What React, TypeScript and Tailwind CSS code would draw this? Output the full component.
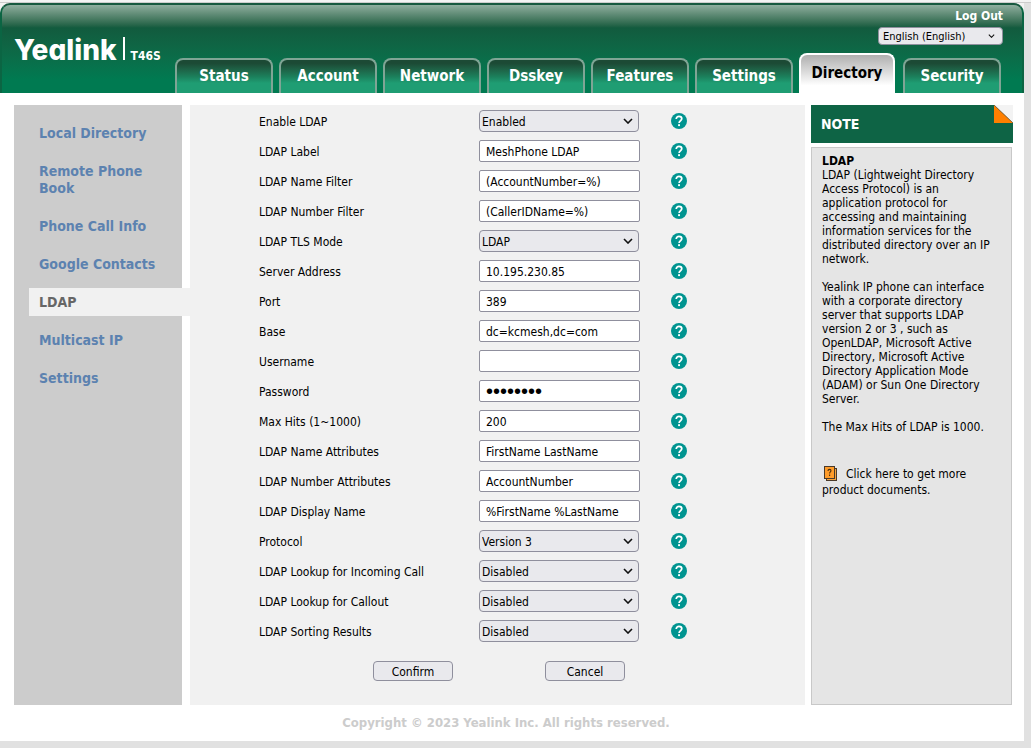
import { useId } from 'react';
import type { ReactNode } from 'react';

type Field = {
  label: string;
  kind: 'select' | 'text' | 'password';
  value: string;
  options?: string[];
};

const toggle = ['Disabled', 'Enabled'];

const fields: Field[] = [
  { label: 'Enable LDAP', kind: 'select', value: 'Enabled', options: toggle },
  { label: 'LDAP Label', kind: 'text', value: 'MeshPhone LDAP' },
  { label: 'LDAP Name Filter', kind: 'text', value: '(AccountNumber=%)' },
  { label: 'LDAP Number Filter', kind: 'text', value: '(CallerIDName=%)' },
  { label: 'LDAP TLS Mode', kind: 'select', value: 'LDAP', options: ['LDAP'] },
  { label: 'Server Address', kind: 'text', value: '10.195.230.85' },
  { label: 'Port', kind: 'text', value: '389' },
  { label: 'Base', kind: 'text', value: 'dc=kcmesh,dc=com' },
  { label: 'Username', kind: 'text', value: '' },
  { label: 'Password', kind: 'password', value: '12345678' },
  { label: 'Max Hits (1~1000)', kind: 'text', value: '200' },
  { label: 'LDAP Name Attributes', kind: 'text', value: 'FirstName LastName' },
  { label: 'LDAP Number Attributes', kind: 'text', value: 'AccountNumber' },
  { label: 'LDAP Display Name', kind: 'text', value: '%FirstName %LastName' },
  { label: 'Protocol', kind: 'select', value: 'Version 3', options: ['Version 3'] },
  { label: 'LDAP Lookup for Incoming Call', kind: 'select', value: 'Disabled', options: toggle },
  { label: 'LDAP Lookup for Callout', kind: 'select', value: 'Disabled', options: toggle },
  { label: 'LDAP Sorting Results', kind: 'select', value: 'Disabled', options: toggle },
];

const tabs = ['Status', 'Account', 'Network', 'Dsskey', 'Features', 'Settings', 'Directory', 'Security'];

const menu = ['Local Directory', 'Remote Phone Book', 'Phone Call Info', 'Google Contacts', 'LDAP', 'Multicast IP', 'Settings'];

function Chevron({ className }: { className: string }) {
  return (
    <svg viewBox="0 0 10 6" className={className} fill="none" stroke="#111" strokeWidth="1.6" aria-hidden="true">
      <path d="M1 1l4 4 4-4" />
    </svg>
  );
}

function HelpIcon() {
  return (
    <svg viewBox="0 0 16 16" className="size-4" aria-hidden="true">
      <circle cx="8" cy="8" r="8" fill="#009490" />
      <path d="M5.2 6.1C5.2 4.3 6.4 3.4 8 3.4s2.8 1 2.8 2.4c0 1.9-2.7 2-2.7 4.1" fill="none" stroke="#fff" strokeWidth="1.7" />
      <rect x="7.1" y="11.2" width="1.9" height="1.9" fill="#fff" />
    </svg>
  );
}

function BookIcon() {
  return (
    <svg viewBox="0 0 13 15" className="mr-[9px] ml-0.5 inline-block h-[15px] w-[13px] align-[-3px]" aria-hidden="true">
      <rect x="2.5" y="2.5" width="10" height="12" fill="#f6a33c" stroke="#4a3a2a" />
      <rect x="0.5" y="0.5" width="10" height="12" fill="#ff9c2a" stroke="#4a3a2a" />
      <path d="M4 4.9c0-1 .6-1.5 1.5-1.5S7 4 7 4.8c0 1-1.4 1.2-1.4 2.6M5.6 8.6v1.3" fill="none" stroke="#4a3010" strokeWidth="1.1" />
    </svg>
  );
}

function FormRow({ field }: { field: Field }) {
  const id = useId();
  return (
    <div className="grid h-[30px] grid-cols-[220px_192px_16px] items-center">
      <label htmlFor={id} className="pt-0.5">{field.label}</label>
      {field.kind === 'select' ? (
        <div className="grid w-40 items-center">
          <select
            id={id}
            defaultValue={field.value}
            className="col-start-1 row-start-1 h-[22px] appearance-none rounded-sm border border-[#8f8f9d] bg-[#e9e9ed] pt-0.5 pr-5 pl-0.5"
          >
            {field.options?.map((o) => <option key={o}>{o}</option>)}
          </select>
          <Chevron className="pointer-events-none col-start-1 row-start-1 mr-1.5 h-1.5 w-2.5 justify-self-end" />
        </div>
      ) : (
        <input
          id={id}
          type={field.kind}
          defaultValue={field.value}
          className={
            field.kind === 'password'
              ? "h-[22px] w-[161px] rounded-xs border border-[#8f8f9d] bg-white px-1.5 font-['Liberation_Sans',sans-serif] text-[20px]"
              : 'h-[22px] w-[161px] rounded-xs border border-[#8f8f9d] bg-white px-1.5 pt-0.5'
          }
        />
      )}
      <HelpIcon />
    </div>
  );
}

function FormButton({ children }: { children: ReactNode }) {
  return (
    <button type="button" className="h-5 w-20 rounded-sm border border-[#8f8f9d] bg-[#e9e9ed] pt-0.5 leading-none">
      {children}
    </button>
  );
}

function Tab({ name, active }: { name: string; active: boolean }) {
  return (
    <li className="flex w-[98px] items-end">
      {active ? (
        <a
          href="#"
          aria-current="page"
          className="flex h-10 w-24 justify-center rounded-t-lg border-2 border-b-0 border-white bg-linear-to-b from-[#b0b0b0] to-white to-80% pt-[7px] text-black"
        >
          {name}
        </a>
      ) : (
        <a
          href="#"
          className="flex h-[35px] w-full justify-center rounded-t-lg border-2 border-b-0 border-[#7fa595] bg-linear-to-b from-[#1c4a35] from-10% via-[#1b7f5b] via-50% to-[#1f9d73] to-70% pt-[5px]"
        >
          {name}
        </a>
      )}
    </li>
  );
}

export default function App() {
  return (
    <div className="min-h-screen bg-[#e1e1e1] pr-[7px] pb-[7px] font-['DejaVu_Sans_Condensed','DejaVu_Sans',sans-serif] text-[12px] leading-[14px] text-black">
      <div className="-mr-[7px] h-[3px] border-b border-[#cccccc] bg-[#f3f3f3]" />
      <div className="bg-white">
        <div className="bg-[#f3f3f3]">
          <header className="flex h-[90px] justify-between rounded-t-[10px] border-2 border-b-0 border-t-[#17583f] border-r-[#0b6543] border-l-[#0b6543] bg-linear-to-b from-[#8fae9f] via-[#125b3e] via-26% to-[#007a51] to-85% pr-[19px] pl-3 text-white">
            <div className="flex items-baseline self-start pt-[31px]">
              <span className="font-[Inter,sans-serif] text-[28px] leading-7 font-extrabold [font-feature-settings:'cv11']">Yealink</span>
              <span className="ml-1.5 h-[23px] w-0.5 bg-white" />
              <span className="ml-1.5 text-[12px] font-bold">T46S</span>
            </div>
            <div className="flex flex-col items-end justify-between">
              <a href="#" className="pt-1 font-bold">Log Out</a>
              <div className="-mt-1 grid w-[125px] items-center">
                <select
                  aria-label="Language"
                  defaultValue="English (English)"
                  className="col-start-1 row-start-1 h-[18px] appearance-none rounded-sm border border-[#8f8f9d] bg-[#e9e9ed] pt-0.5 pl-1 text-[11px] text-black"
                >
                  <option>English (English)</option>
                </select>
                <Chevron className="pointer-events-none col-start-1 row-start-1 mr-2 h-1 w-[7px] justify-self-end" />
              </div>
              <nav aria-label="Main" className="pr-0.5">
                <ul className="flex items-end gap-1.5 text-[15px] leading-[22px] font-bold">
                  {tabs.map((t) => <Tab key={t} name={t} active={t === 'Directory'} />)}
                </ul>
              </nav>
            </div>
          </header>
        </div>

        <div className="flex items-stretch pt-3 pr-[11px] pl-3.5">
          <nav aria-label="Directory" className="w-[168px] shrink-0 bg-[#cccccc] pt-3.5 pl-[15px]">
            <ul className="flex flex-col gap-2.5 text-[14px] leading-[17px] font-bold text-[#5c82b0]">
              {menu.map((m) =>
                m === 'LDAP' ? (
                  <li key={m} className="-mr-2 bg-[#f1f1f1] pt-1.5 pb-[5px] pl-2.5 text-[#666666]">
                    <a href="#" aria-current="page">{m}</a>
                  </li>
                ) : (
                  <li key={m} className="pt-1.5 pr-6 pb-[5px] pl-2.5">
                    <a href="#">{m}</a>
                  </li>
                ),
              )}
            </ul>
          </nav>

          <main className="ml-2 grow bg-[#f1f1f1] pt-px pb-6 pl-[69px]">
            <form>
              {fields.map((f) => <FormRow key={f.label} field={f} />)}
              <div className="flex gap-[92px] pt-[15px] pl-[114px]">
                <FormButton>Confirm</FormButton>
                <FormButton>Cancel</FormButton>
              </div>
            </form>
          </main>

          <aside className="ml-1.5 flex w-[202px] shrink-0 flex-col gap-1">
            <div className="flex h-[38px] items-start justify-between bg-[#0e6445] pl-2.5">
              <h2 className="self-center text-[14px] font-bold text-white">NOTE</h2>
              <svg viewBox="0 0 19 18" className="h-[18px] w-[19px]" aria-hidden="true">
                <path d="M0 0h19v18z" fill="#f3f3f3" />
                <path d="M0 0v18h19z" fill="#ff7f00" />
                <path d="M0 0l19 18" stroke="#7a5a3a" strokeWidth="0.8" />
              </svg>
            </div>
            <div className="mr-px grow border border-[#c8c8c8] bg-[#e5e5e5] pt-1.5 pr-4 pl-2.5">
              <h3 className="font-bold">LDAP</h3>
              <p>
                LDAP (Lightweight Directory Access Protocol) is an application protocol for accessing and maintaining
                information services for the distributed directory over an IP network.
              </p>
              <p className="mt-3.5">
                Yealink IP phone can interface with a corporate directory server that supports LDAP version 2 or 3 , such
                as OpenLDAP, Microsoft Active Directory, Microsoft Active Directory Application Mode (ADAM) or Sun One
                Directory Server.
              </p>
              <p className="mt-3.5">The Max Hits of LDAP is 1000.</p>
              <a href="#" className="mt-8 block leading-4">
                <BookIcon />
                Click here to get more product documents.
              </a>
            </div>
          </aside>
        </div>

        <footer className="flex h-9 items-center justify-center pr-3 text-[13px] font-bold text-[#cccccc]">
          Copyright © 2023 Yealink Inc. All rights reserved.
        </footer>
      </div>
    </div>
  );
}
